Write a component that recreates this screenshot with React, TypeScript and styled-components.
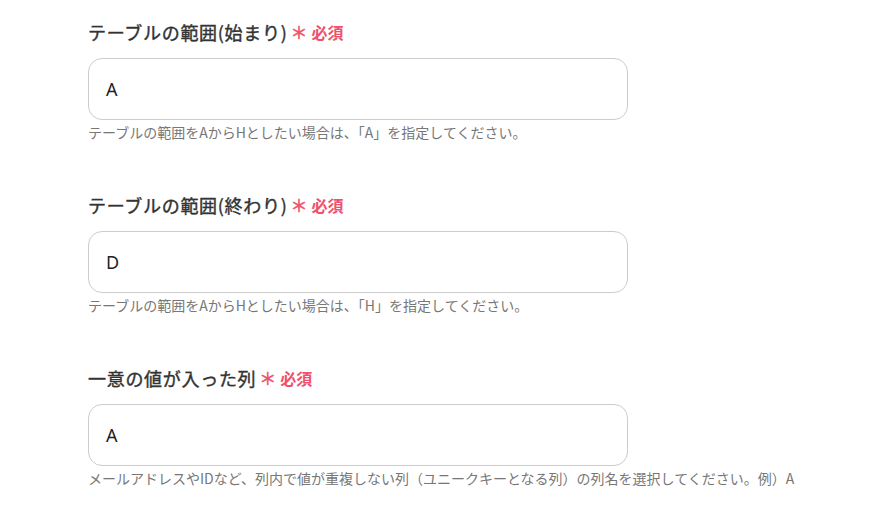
import React from "react";
import styled, { createGlobalStyle } from "styled-components";

const GlobalStyle = createGlobalStyle`
  html, body {
    margin: 0;
    padding: 0;
    background: #ffffff;
  }
  body {
    font-family: "Noto Sans CJK JP", "Noto Sans", sans-serif;
  }
`;

type FieldData = {
  label: string;
  value: string;
  help: string;
};

const fields: FieldData[] = [
  {
    label: "テーブルの範囲(始まり)",
    value: "A",
    help: "テーブルの範囲をAからHとしたい場合は、「A」を指定してください。",
  },
  {
    label: "テーブルの範囲(終わり)",
    value: "D",
    help: "テーブルの範囲をAからHとしたい場合は、「H」を指定してください。",
  },
  {
    label: "一意の値が入った列",
    value: "A",
    help: "メールアドレスやIDなど、列内で値が重複しない列（ユニークキーとなる列）の列名を選択してください。例）A",
  },
];

const App: React.FC = () => {
  return (
    <>
      <GlobalStyle />
      <Page>
        {fields.map((f, i) => (
          <Field key={i}>
            <LabelRow>
              <Label>{f.label}</Label>
              <Required>
                <Star>＊</Star>必須
              </Required>
            </LabelRow>
            <Input>{f.value}</Input>
            <Help>{f.help}</Help>
          </Field>
        ))}
      </Page>
    </>
  );
};

const Page = styled.div`
  display: flex;
  flex-direction: column;
  gap: 50px;
  padding: 19px 0 0 88px;
  width: 890px;
  box-sizing: border-box;
`;

const Field = styled.div`
  display: flex;
  flex-direction: column;
  width: 540px;
`;

const LabelRow = styled.div`
  display: flex;
  align-items: center;
  height: 26px;
  margin-bottom: 13px;
`;

const Label = styled.span`
  font-size: 18px;
  font-weight: 400;
  -webkit-text-stroke: 0.4px #333333;
  letter-spacing: 0.7px;
  color: #333333;
  line-height: 26px;
`;

const Required = styled.span`
  display: flex;
  align-items: center;
  margin-left: 3px;
  font-size: 16px;
  font-weight: 700;
  color: #f0506a;
  line-height: 26px;
`;

const Star = styled.span`
  font-size: 17px;
  font-weight: 400;
  -webkit-text-stroke: 0.5px #f0506a;
  margin-right: 4px;
`;

const Input = styled.div`
  height: 62px;
  box-sizing: border-box;
  border: 1px solid #cccccc;
  border-radius: 14px;
  padding: 0 17px;
  display: flex;
  align-items: center;
  font-family: "Noto Sans", "Noto Sans CJK JP", sans-serif;
  font-size: 18px;
  color: #222222;
`;

const Help = styled.div`
  margin-top: 2px;
  font-size: 14px;
  line-height: 20px;
  color: #777777;
  white-space: nowrap;
`;

export default App;
